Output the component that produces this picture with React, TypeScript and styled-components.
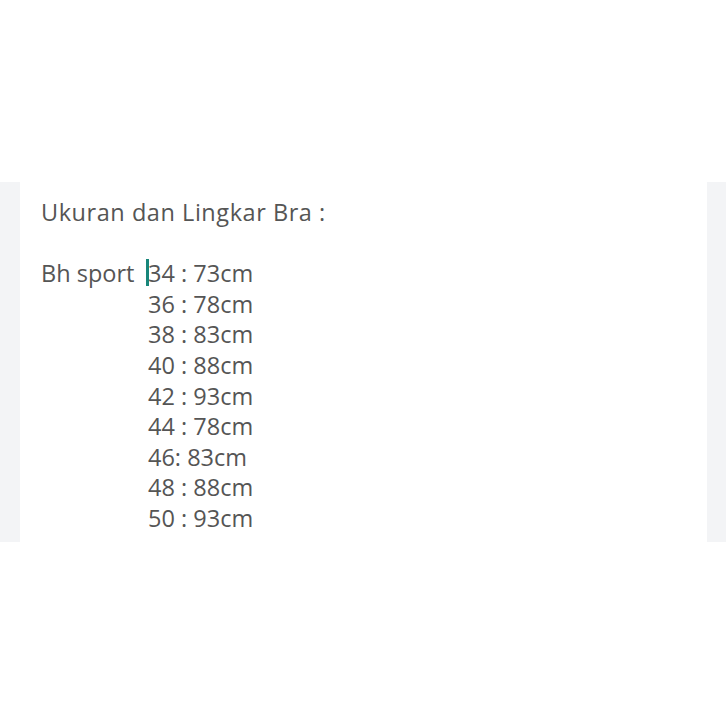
import React from "react";
import styled, { createGlobalStyle } from "styled-components";

const Global = createGlobalStyle`
  html, body { margin: 0; padding: 0; background: #ffffff; }
  body { font-family: "Open Sans", "Liberation Sans", sans-serif; }
`;

const Page = styled.div`
  width: 726px;
  height: 726px;
  padding-top: 182px;
  box-sizing: border-box;
`;

const Band = styled.div`
  height: 360px;
  background: #f3f4f6;
  display: flex;
  justify-content: center;
  padding: 0 19px 0 20px;
`;

const Sheet = styled.div`
  flex: 1;
  background: #ffffff;
  padding: 15px 0 0 21px;
  font-size: 23.5px;
  line-height: 30.6px;
  color: #555555;
`;

const Title = styled.div`
  margin-bottom: 30.6px;
  letter-spacing: 0.55px;
`;

const Block = styled.div`
  display: grid;
  grid-template-columns: 107px auto;
  letter-spacing: 0;
`;

const Label = styled.div``;

const Values = styled.div`
  display: flex;
  flex-direction: column;
`;

const Value = styled.div`
  position: relative;
`;

const Caret = styled.span`
  position: absolute;
  left: -2px;
  top: 1px;
  width: 2.5px;
  height: 27px;
  background: #18867a;
`;

const rows = [
  "34 : 73cm",
  "36 : 78cm",
  "38 : 83cm",
  "40 : 88cm",
  "42 : 93cm",
  "44 : 78cm",
  "46: 83cm",
  "48 : 88cm",
  "50 : 93cm",
];

export default function App() {
  return (
    <Page>
      <Global />
      <Band>
        <Sheet>
          <Title>Ukuran dan Lingkar Bra :</Title>
          <Block>
            <Label>Bh sport</Label>
            <Values>
              {rows.map((r, i) => (
                <Value key={r}>
                  {i === 0 && <Caret />}
                  {r}
                </Value>
              ))}
            </Values>
          </Block>
        </Sheet>
      </Band>
    </Page>
  );
}
